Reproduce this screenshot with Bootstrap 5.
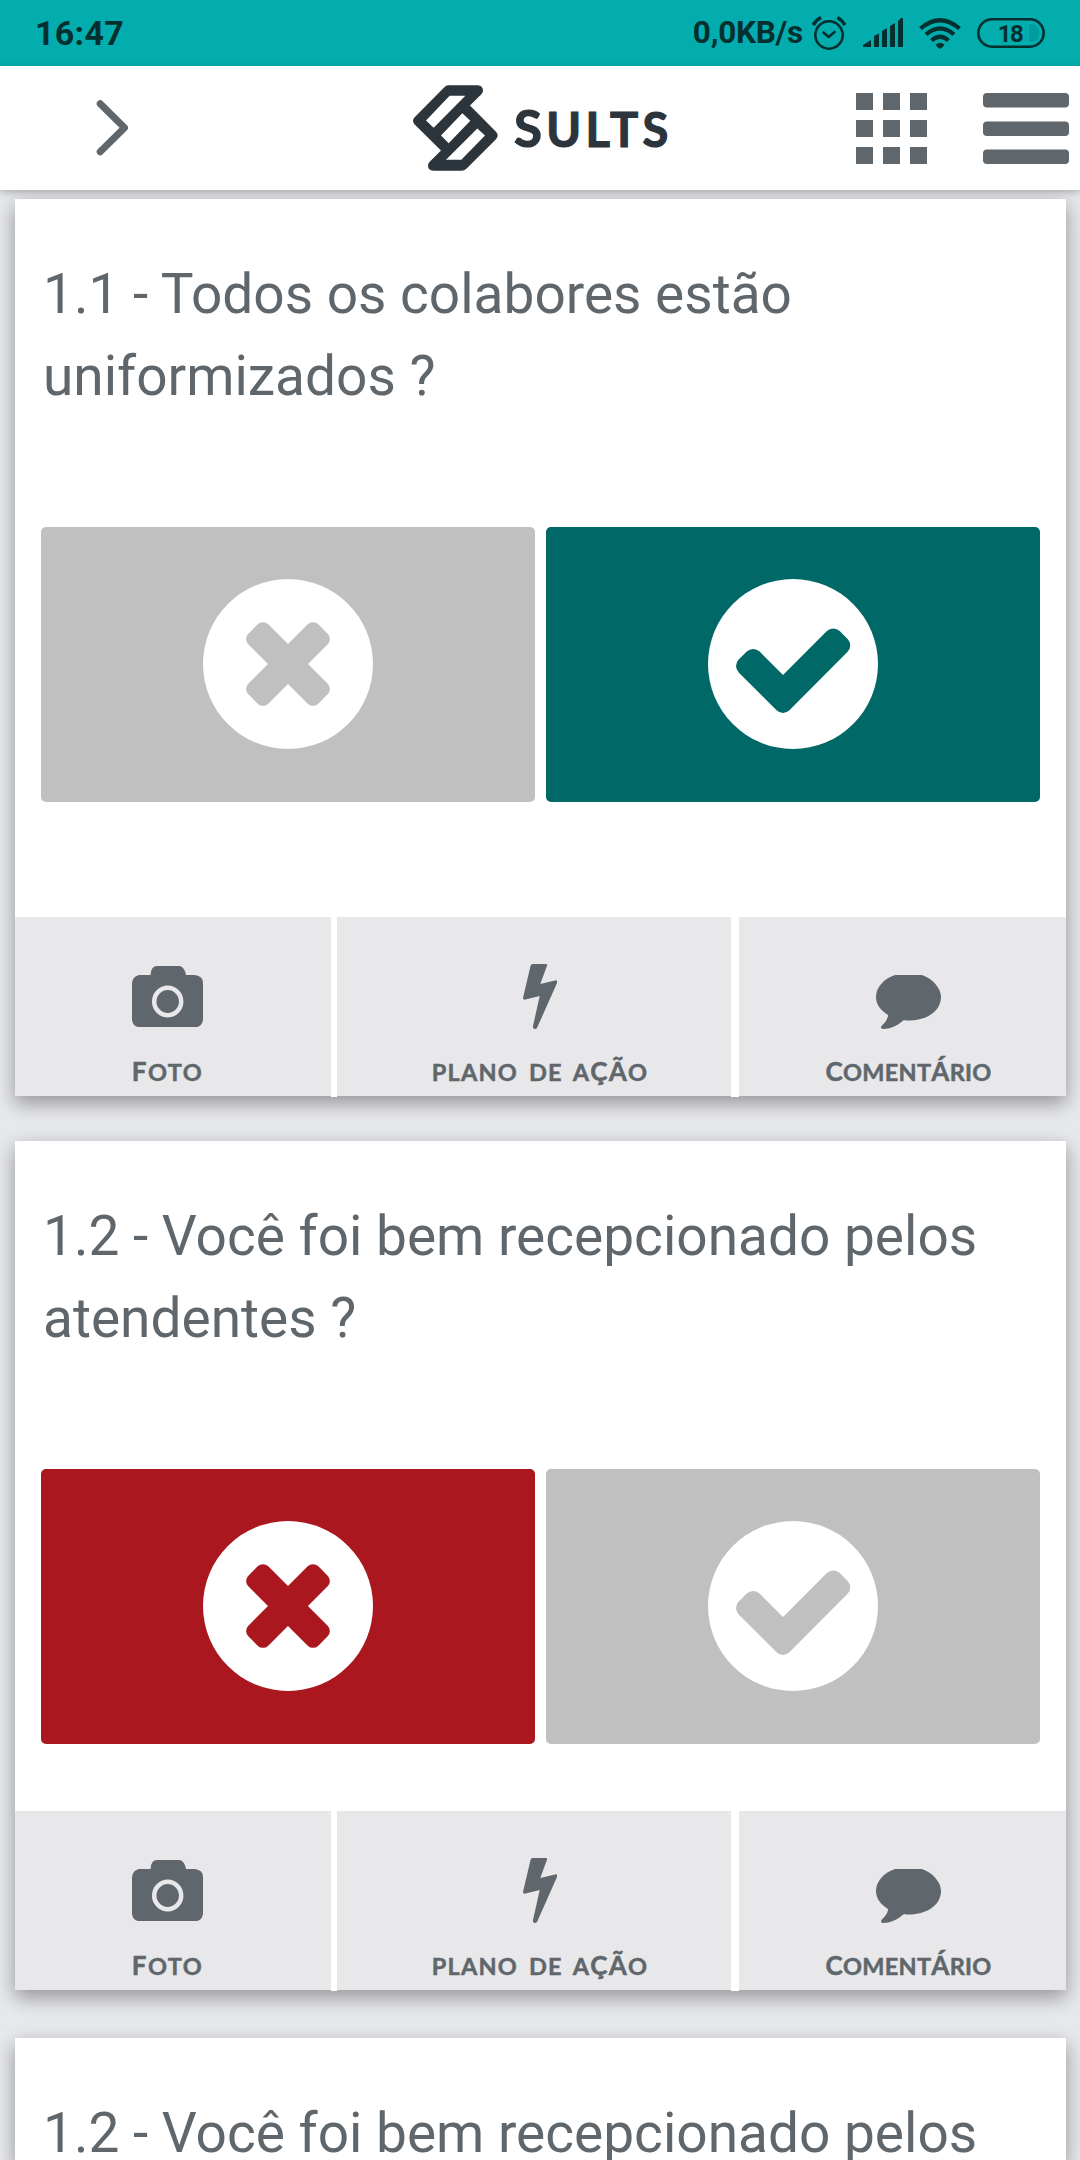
<!DOCTYPE html>
<html lang="pt-BR">
<head>
<meta charset="utf-8">
<meta name="viewport" content="width=device-width, initial-scale=1">
<title>Sults</title>
<link href="https://cdn.jsdelivr.net/npm/bootstrap@5.3.0/dist/css/bootstrap.min.css" rel="stylesheet">
<style>
  body { background: #e7e8eb; font-family: Roboto, sans-serif; color: #5f676c; height: 2160px; }
  svg { display: block; flex: none; }
  .statusbar { height: 66px; background: #03adae; color: #042f2f; font-weight: 700; padding: 0 35px 0 35px; }
  .clock { font-size: 34px; line-height: 67px; letter-spacing: .3px; }
  .netspeed { font-size: 31.5px; line-height: 68px; margin-right: 8px; letter-spacing: -.25px; }
  .appbar { height: 124px; z-index: 2; box-shadow: 0 2px 5px rgba(0,0,0,.16), 0 2px 10px rgba(0,0,0,.12); padding: 0 11px 0 96px; }
  .brand { margin-left: 284px; color: #2d353c; font: 700 47px/60px Lato, sans-serif; }
  .brand-word { margin-left: 16px; letter-spacing: 4.3px; -webkit-text-stroke: 1.2px #2d353c; width: 170px; }
  .brand-word span { font-size: 51px; }
  .menu-icon { margin-left: 56px; }
  .cards { padding: 9px 14px 0 15px; }
  .question { border: 0; border-radius: 0; height: 897px; color: inherit;
    box-shadow: 0 8px 17px rgba(0,0,0,.2), 0 6px 20px rgba(0,0,0,.19); }
  .question.q-second { height: 849px; margin: 45px 0 48px; }
  .question.q-last { height: 122px; }
  .q-title { font-size: 55px; line-height: 82px; font-weight: 400; height: 328px; padding: 54px 20px 0 28px; }
  .q-last .q-title { height: auto; }
  .answers { padding: 0 26px; gap: 11px; }
  .answer { flex: 1 1 0; height: 275px; border-radius: 5px; padding: 0 0 2px; border: 0; background: #c0c0c0; color: #c0c0c0; }
  .answer.is-yes { background: #006866; color: #006866; }
  .answer.is-no { background: #aa171f; color: #aa171f; }
  .actions { height: 179px; }
  .action { background: #e8e8ea; color: #5f676c; height: 179px; padding-top: 46px; font: 700 23.5px/30px Lato, sans-serif; text-transform: uppercase; }
  .action span.cap { font-size: 26px; }
  .action .txt { margin-top: 27px; line-height: 30px; white-space: nowrap; -webkit-text-stroke: .5px #5f676c; }
  .a-foto { width: 316px; padding-right: 11px; letter-spacing: 1.5px; }
  .a-plano { width: 394px; padding-left: 12px; letter-spacing: 1.2px; word-spacing: 4px; }
  .a-coment { width: 327px; padding-left: 12px; letter-spacing: .3px; }
  .gap-a { width: 6px; } .gap-b { width: 8px; }
  .gap-a, .gap-b { height: 180px; background: #fff; }
</style>
<script src="https://cdn.jsdelivr.net/npm/bootstrap@5.3.0/dist/js/bootstrap.bundle.min.js"></script>
</head>
<body class="overflow-hidden">
<svg width="0" height="0" class="position-absolute">
  <symbol id="i-no" viewBox="0 0 170 170"><circle cx="85" cy="85" r="85" fill="#fff"/><g fill="currentColor" transform="rotate(45 85 85)"><rect x="35.5" y="70.9" width="99" height="28.2" rx="7.5"/><rect x="70.9" y="35.5" width="28.2" height="99" rx="7.5"/></g></symbol>
  <symbol id="i-yes" viewBox="0 0 170 170"><circle cx="85" cy="85" r="85" fill="#fff"/><path fill="currentColor" d="M30.7 93.4A9 9 0 0 1 30.7 80.6L38.8 72.6A9 9 0 0 1 51.6 72.6L75 96L118.9 52.1A9 9 0 0 1 131.7 52.1L139.6 59.9A9 9 0 0 1 139.6 72.7L81.4 131.3A9 9 0 0 1 68.6 131.3Z"/></symbol>
  <symbol id="i-camera" viewBox="0 0 71 66"><path fill="currentColor" d="M7 12H18.5Q19 3 25 3H48Q53 5 54 12H63Q71 13 71 20V57Q70 63 65 64H6Q1 63 0 57V20Q1 13 7 12Z"/><ellipse cx="35.7" cy="38.5" rx="13.5" ry="13.7" fill="none" stroke="#e8e8ea" stroke-width="4.5"/></symbol>
  <symbol id="i-bolt" viewBox="0 0 34 66"><path fill="currentColor" d="M9.5 1H23Q24.5 1 24 2.7L17.3 21L33 17.2Q34.3 17.1 34 20L14 65Q12 67 10 65V63L16.7 33L1.5 36.8Q0 36.8 0 35L7.5 3Q8 1 9.5 1Z"/></symbol>
  <symbol id="i-comment" viewBox="0 0 65 66"><path fill="currentColor" d="M19 12H46C57 16 65 25 65 34C65 48 51 57.5 33 57.5Q31 57.6 28 57C21 63 14 66 7 66Q4 65.5 5.5 63Q12 57 12 52C4 47 0 41 0 34C0 25 7 16 19 12Z"/></symbol>
</svg>

<div class="statusbar d-flex align-items-center justify-content-between">
  <div class="clock">16:47</div>
  <div class="d-flex align-items-center">
    <span class="netspeed">0,0KB/s</span>
    <svg width="36" height="36" viewBox="0 0 36 36" fill="none" stroke="#042f2f" stroke-width="2.6" stroke-linecap="round"><circle cx="18" cy="20" r="13.7"/><path d="M12.5 17.5L17.7 22L23.5 17" stroke-linejoin="round"/><path d="M2.2 10Q5 5 10 2.5M34 10Q31 5 26.5 2.5" stroke-width="3.6" stroke-linecap="butt"/></svg>
    <svg class="ms-3" width="40" height="30" viewBox="0 0 40 30" fill="#042f2f"><path d="M0 29V27L8 22V29ZM11 29V18L16 15.5V29ZM19 29V13L24 10V29ZM27 29V8L32 5V29ZM35 29V3L38 0H40V29Z"/></svg>
    <svg class="ms-3" width="42" height="31" viewBox="0 0 42 31" fill="none" stroke="#042f2f" stroke-width="4.2"><path d="M1.500 10.500Q21-6 40.500 10.500M7 16.500Q21 4.500 35 16.500M12.500 22.500Q21 15 29.500 22.500"/><path stroke="none" fill="#042f2f" d="M16.500 27Q21 22.500 25.500 27L22 30.500H20Z"/></svg>
    <svg class="ms-3" width="68" height="30" viewBox="0 0 68 30"><rect x="1.3" y="1.3" width="65.4" height="27.4" rx="13.7" fill="none" stroke="#042f2f" stroke-width="2.6"/><path d="M52 6Q62 6 62 15Q62 24 52 24Z" fill="#039b9c"/><text x="33" y="23.500" text-anchor="middle" font-family="Roboto" font-weight="700" font-size="24" letter-spacing="-1.500" fill="#042f2f">18</text></svg>
  </div>
</div>

<nav class="appbar bg-white position-relative d-flex align-items-center">
  <svg width="33" height="56" viewBox="0 0 33 56"><path d="M4.200 3.800L28.500 27.800L4.200 51.800" fill="none" stroke="#5f676c" stroke-width="7" stroke-linejoin="round" stroke-linecap="round"/></svg>
  <div class="brand d-flex align-items-center">
    <svg width="85" height="86" viewBox="98 76 255 257"><path fill="#2d353c" fill-rule="evenodd" d="M203 76H292Q308 77 308 92Q308 98 303 103L269 137L347 216Q357 227 347 238L259 326Q252 333 243 333H159Q143 332 143 317Q143 311 148 306L182 272L103 194Q93 183 103 172L192 82Q198 76 203 76ZM208 108H255L160 204L137 182ZM246 160L270 183L205 250L182 227ZM291 206L314 227L243 300H197Z"/></svg>
    <div class="brand-word"><span>S</span>ULTS</div>
  </div>
  <svg class="ms-auto" width="71" height="71" viewBox="0 0 71 71" fill="#5f676c"><path d="M0 0h17v17H0zM27 0h17v17H27zM54 0h17v17H54zM0 27h17v17H0zM27 27h17v17H27zM54 27h17v17H54zM0 54h17v17H0zM27 54h17v17H27zM54 54h17v17H54z"/></svg>
  <svg class="menu-icon" width="86" height="71" viewBox="0 0 86 71" fill="#5f676c"><rect width="86" height="14.5" rx="4"/><rect y="28.5" width="86" height="14.5" rx="4"/><rect y="56.5" width="86" height="14.5" rx="4"/></svg>
</nav>

<main class="cards">
  <section class="card question">
    <h2 class="q-title m-0">1.1 - Todos os colabores estão<br>uniformizados ?</h2>
    <div class="answers d-flex">
      <button class="answer btn d-flex align-items-center justify-content-center" aria-label="Não"><svg width="170" height="170"><use href="#i-no"/></svg></button>
      <button class="answer is-yes btn d-flex align-items-center justify-content-center" aria-label="Sim"><svg width="170" height="170"><use href="#i-yes"/></svg></button>
    </div>
    <div class="actions d-flex mt-auto">
      <div class="action a-foto d-flex flex-column align-items-center"><svg width="71" height="66"><use href="#i-camera"/></svg><div class="txt"><span class="cap">F</span>oto</div></div>
      <div class="gap-a"></div>
      <div class="action a-plano d-flex flex-column align-items-center"><svg width="34" height="66"><use href="#i-bolt"/></svg><div class="txt">plano de a<span class="cap">çã</span>o</div></div>
      <div class="gap-b"></div>
      <div class="action a-coment d-flex flex-column align-items-center"><svg width="65" height="66"><use href="#i-comment"/></svg><div class="txt"><span class="cap">C</span>oment<span class="cap">á</span>rio</div></div>
    </div>
  </section>

  <section class="card question q-second">
    <h2 class="q-title m-0">1.2 - Você foi bem recepcionado pelos<br>atendentes ?</h2>
    <div class="answers d-flex">
      <button class="answer is-no btn d-flex align-items-center justify-content-center" aria-label="Não"><svg width="170" height="170"><use href="#i-no"/></svg></button>
      <button class="answer btn d-flex align-items-center justify-content-center" aria-label="Sim"><svg width="170" height="170"><use href="#i-yes"/></svg></button>
    </div>
    <div class="actions d-flex mt-auto">
      <div class="action a-foto d-flex flex-column align-items-center"><svg width="71" height="66"><use href="#i-camera"/></svg><div class="txt"><span class="cap">F</span>oto</div></div>
      <div class="gap-a"></div>
      <div class="action a-plano d-flex flex-column align-items-center"><svg width="34" height="66"><use href="#i-bolt"/></svg><div class="txt">plano de a<span class="cap">çã</span>o</div></div>
      <div class="gap-b"></div>
      <div class="action a-coment d-flex flex-column align-items-center"><svg width="65" height="66"><use href="#i-comment"/></svg><div class="txt"><span class="cap">C</span>oment<span class="cap">á</span>rio</div></div>
    </div>
  </section>

  <section class="card question q-last">
    <h2 class="q-title m-0">1.2 - Você foi bem recepcionado pelos</h2>
  </section>
</main>
</body>
</html>
